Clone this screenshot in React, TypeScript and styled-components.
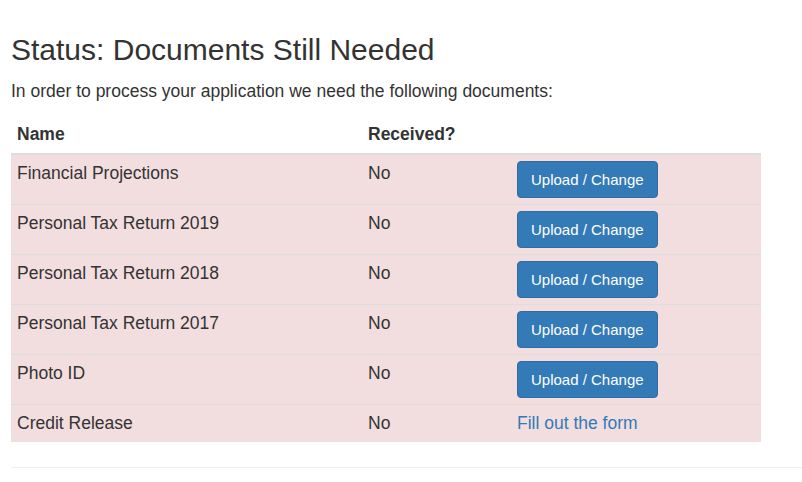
import React from 'react';
import styled, { createGlobalStyle } from 'styled-components';

const GlobalStyle = createGlobalStyle`
  html, body {
    margin: 0;
    padding: 0;
    background: #fff;
  }
  body {
    font-family: 'Liberation Sans', Arial, Helvetica, sans-serif;
    font-size: 17.5px;
    line-height: 25px;
    color: #333;
  }
`;

const SCPage = styled.div`
  padding: 33px 0 0 11px;
`;

const SCTitle = styled.h3`
  margin: 0 0 12.5px;
  font-size: 30px;
  font-weight: 500;
  line-height: 33px;
  color: #333;
`;

const SCIntro = styled.p`
  margin: 0 0 12.5px;
`;

const SCTable = styled.table`
  width: 750px;
  table-layout: fixed;
  border-collapse: collapse;
  border-spacing: 0;
  margin-bottom: 25px;
`;

// widths are content widths; each cell adds 6px padding per side
const SCHeadCell = styled.th<{ $width: number }>`
  width: ${(p) => p.$width}px;
  padding: 6px;
  text-align: left;
  font-weight: 700;
  vertical-align: bottom;
  border-bottom: 2px solid #ddd;
`;

const SCRow = styled.tr`
  background: #f2dede;
`;

const SCCell = styled.td`
  padding: 6px;
  vertical-align: top;
  border-top: 1px solid #ddd;
`;

const SCUploadButton = styled.button`
  display: inline-block;
  height: 37px;
  padding: 0 13px;
  font-family: 'Liberation Sans', Arial, Helvetica, sans-serif;
  font-size: 15px;
  line-height: 22px;
  color: #fff;
  background: #337ab7;
  border: 1px solid #2e6da4;
  border-radius: 4px;
  cursor: pointer;
`;

const SCFormLink = styled.a`
  color: #337ab7;
  text-decoration: none;
  cursor: pointer;
`;

const SCRule = styled.hr`
  margin: 25px 0;
  border: 0;
  border-top: 1px solid #eee;
`;

interface IDocument {
  name: string;
  received: boolean;
  form?: boolean;
}

const documents: IDocument[] = [
  { name: 'Financial Projections', received: false },
  { name: 'Personal Tax Return 2019', received: false },
  { name: 'Personal Tax Return 2018', received: false },
  { name: 'Personal Tax Return 2017', received: false },
  { name: 'Photo ID', received: false },
  { name: 'Credit Release', received: false, form: true },
];

const App = () => {
  return (
    <SCPage>
      <GlobalStyle />
      <SCTitle>Status: Documents Still Needed</SCTitle>
      <SCIntro>In order to process your application we need the following documents:</SCIntro>
      <SCTable>
        <thead>
          <tr>
            <SCHeadCell $width={339}>Name</SCHeadCell>
            <SCHeadCell $width={137}>Received?</SCHeadCell>
            <SCHeadCell $width={238}></SCHeadCell>
          </tr>
        </thead>
        <tbody>
          {documents.map((doc) => (
            <SCRow key={doc.name}>
              <SCCell>{doc.name}</SCCell>
              <SCCell>{doc.received ? 'Yes' : 'No'}</SCCell>
              <SCCell>
                {doc.form ? (
                  <SCFormLink>Fill out the form</SCFormLink>
                ) : (
                  <SCUploadButton>Upload / Change</SCUploadButton>
                )}
              </SCCell>
            </SCRow>
          ))}
        </tbody>
      </SCTable>
      <SCRule />
    </SCPage>
  );
};

export default App;
